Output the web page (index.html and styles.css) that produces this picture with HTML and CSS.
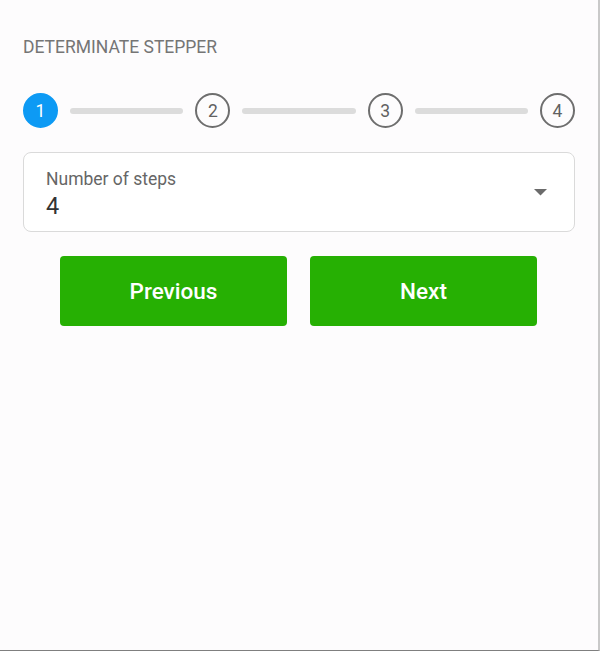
FILE: index.html
```html
<!DOCTYPE html>
<html lang="en">
<head>
<meta charset="utf-8">
<title>Determinate Stepper</title>
<link rel="stylesheet" href="styles.css">
</head>
<body>
<div class="frame">
  <h2 class="title">DETERMINATE STEPPER</h2>
  <div class="stepper">
    <div class="step active">1</div>
    <div class="line"></div>
    <div class="step">2</div>
    <div class="line"></div>
    <div class="step">3</div>
    <div class="line"></div>
    <div class="step">4</div>
  </div>
  <div class="select">
    <div class="select-text">
      <div class="select-label">Number of steps</div>
      <div class="select-value">4</div>
    </div>
    <svg class="arrow" width="13" height="7" viewBox="0 0 13 7"><path d="M0 0 H13 L6.5 6.5 Z" fill="#6b6b6b"/></svg>
  </div>
  <div class="buttons">
    <button class="btn">Previous</button>
    <button class="btn">Next</button>
  </div>
</div>
</body>
</html>
```
FILE: styles.css
```css
html, body {
  margin: 0;
  padding: 0;
  background: #fdfcfd;
}
body {
  font-family: Roboto, "Noto Sans", sans-serif;
}
.frame {
  width: 552px;
  height: 613px;
  padding: 37px 23px 0 23px;
  background: #fdfcfd;
  border-right: 2px solid #c9c9c9;
  border-bottom: 1px solid #7f7f7f;
}
.title {
  margin: 0;
  font-size: 17.5px;
  line-height: 21px;
  font-weight: 400;
  color: #757575;
}
.stepper {
  margin-top: 35px;
  display: flex;
  align-items: center;
}
.step {
  width: 31px;
  height: 31px;
  flex: 0 0 auto;
  border: 2px solid #6e6e6e;
  border-radius: 50%;
  display: flex;
  align-items: center;
  justify-content: center;
  font-size: 17.5px;
  color: #616161;
  background: #fdfcfd;
}
.step.active {
  background: #0d9af4;
  border-color: #0d9af4;
  color: #ffffff;
}
.line {
  flex: 1;
  height: 6px;
  margin: 0 12px;
  border-radius: 3px;
  background: #dcdcdc;
}
.select {
  margin-top: 24px;
  height: 78px;
  border: 1px solid #dadada;
  border-radius: 8px;
  background: #ffffff;
  display: flex;
  align-items: center;
  justify-content: space-between;
  padding: 0 27px 0 22px;
}
.select-text {
  display: flex;
  flex-direction: column;
  padding-top: 5px;
}
.select-label {
  font-size: 17.5px;
  line-height: 21px;
  color: #666666;
}
.select-value {
  margin-top: 2px;
  font-size: 23.5px;
  line-height: 28px;
  color: #333333;
}
.arrow {
  display: block;
}
.buttons {
  margin-top: 24px;
  padding-right: 1px;
  display: flex;
  justify-content: center;
  gap: 23px;
}
.btn {
  width: 227px;
  height: 70px;
  border: none;
  border-radius: 4px;
  background: #26b003;
  color: #ffffff;
  font-family: Roboto, "Noto Sans", sans-serif;
  font-size: 22.5px;
  font-weight: 500;
  padding: 0;
}
```
